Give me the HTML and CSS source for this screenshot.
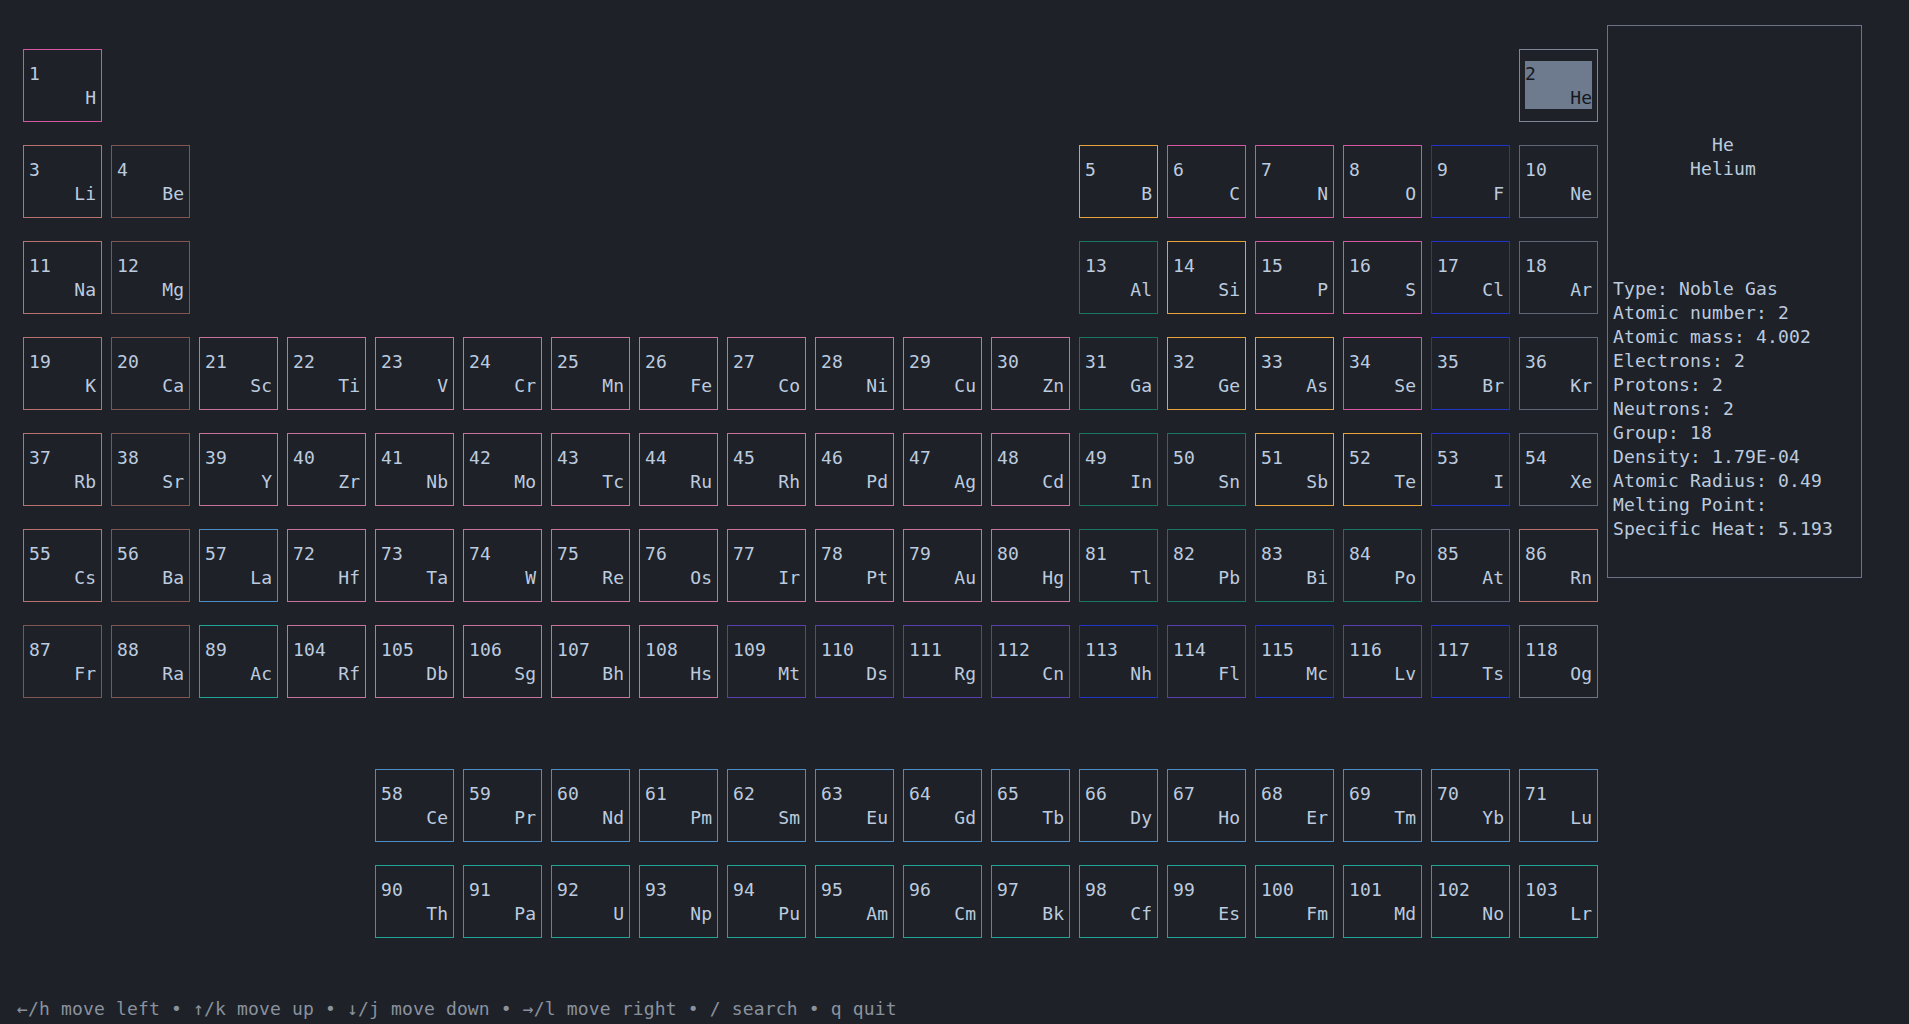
FILE: index.html
```html
<!DOCTYPE html>
<html lang="en">
<head>
<meta charset="utf-8">
<title>Periodic Table</title>
<link rel="stylesheet" href="styles.css">
</head>
<body>
<div class="screen">
  <div class="main">
    <div class="table">
      <div class="grid">
        <div class="el pink"><span>1</span><span class="s">H</span></div>
        <div class="skip16"></div>
        <div class="el gray sel"><span>2</span><span class="s">He</span></div>

        <div class="el salmon"><span>3</span><span class="s">Li</span></div>
        <div class="el brown"><span>4</span><span class="s">Be</span></div>
        <div class="skip10"></div>
        <div class="el orange"><span>5</span><span class="s">B</span></div>
        <div class="el pink"><span>6</span><span class="s">C</span></div>
        <div class="el pink"><span>7</span><span class="s">N</span></div>
        <div class="el pink"><span>8</span><span class="s">O</span></div>
        <div class="el blue"><span>9</span><span class="s">F</span></div>
        <div class="el gray"><span>10</span><span class="s">Ne</span></div>

        <div class="el salmon"><span>11</span><span class="s">Na</span></div>
        <div class="el brown"><span>12</span><span class="s">Mg</span></div>
        <div class="skip10"></div>
        <div class="el teal"><span>13</span><span class="s">Al</span></div>
        <div class="el orange"><span>14</span><span class="s">Si</span></div>
        <div class="el pink"><span>15</span><span class="s">P</span></div>
        <div class="el pink"><span>16</span><span class="s">S</span></div>
        <div class="el blue"><span>17</span><span class="s">Cl</span></div>
        <div class="el gray"><span>18</span><span class="s">Ar</span></div>

        <div class="el salmon"><span>19</span><span class="s">K</span></div>
        <div class="el brown"><span>20</span><span class="s">Ca</span></div>
        <div class="el mauve"><span>21</span><span class="s">Sc</span></div>
        <div class="el mauve"><span>22</span><span class="s">Ti</span></div>
        <div class="el mauve"><span>23</span><span class="s">V</span></div>
        <div class="el mauve"><span>24</span><span class="s">Cr</span></div>
        <div class="el mauve"><span>25</span><span class="s">Mn</span></div>
        <div class="el mauve"><span>26</span><span class="s">Fe</span></div>
        <div class="el mauve"><span>27</span><span class="s">Co</span></div>
        <div class="el mauve"><span>28</span><span class="s">Ni</span></div>
        <div class="el mauve"><span>29</span><span class="s">Cu</span></div>
        <div class="el mauve"><span>30</span><span class="s">Zn</span></div>
        <div class="el teal"><span>31</span><span class="s">Ga</span></div>
        <div class="el orange"><span>32</span><span class="s">Ge</span></div>
        <div class="el orange"><span>33</span><span class="s">As</span></div>
        <div class="el pink"><span>34</span><span class="s">Se</span></div>
        <div class="el blue"><span>35</span><span class="s">Br</span></div>
        <div class="el gray"><span>36</span><span class="s">Kr</span></div>

        <div class="el salmon"><span>37</span><span class="s">Rb</span></div>
        <div class="el brown"><span>38</span><span class="s">Sr</span></div>
        <div class="el mauve"><span>39</span><span class="s">Y</span></div>
        <div class="el mauve"><span>40</span><span class="s">Zr</span></div>
        <div class="el mauve"><span>41</span><span class="s">Nb</span></div>
        <div class="el mauve"><span>42</span><span class="s">Mo</span></div>
        <div class="el mauve"><span>43</span><span class="s">Tc</span></div>
        <div class="el mauve"><span>44</span><span class="s">Ru</span></div>
        <div class="el mauve"><span>45</span><span class="s">Rh</span></div>
        <div class="el mauve"><span>46</span><span class="s">Pd</span></div>
        <div class="el mauve"><span>47</span><span class="s">Ag</span></div>
        <div class="el mauve"><span>48</span><span class="s">Cd</span></div>
        <div class="el teal"><span>49</span><span class="s">In</span></div>
        <div class="el teal"><span>50</span><span class="s">Sn</span></div>
        <div class="el orange"><span>51</span><span class="s">Sb</span></div>
        <div class="el orange"><span>52</span><span class="s">Te</span></div>
        <div class="el blue"><span>53</span><span class="s">I</span></div>
        <div class="el gray"><span>54</span><span class="s">Xe</span></div>

        <div class="el salmon"><span>55</span><span class="s">Cs</span></div>
        <div class="el brown"><span>56</span><span class="s">Ba</span></div>
        <div class="el sky"><span>57</span><span class="s">La</span></div>
        <div class="el mauve"><span>72</span><span class="s">Hf</span></div>
        <div class="el mauve"><span>73</span><span class="s">Ta</span></div>
        <div class="el mauve"><span>74</span><span class="s">W</span></div>
        <div class="el mauve"><span>75</span><span class="s">Re</span></div>
        <div class="el mauve"><span>76</span><span class="s">Os</span></div>
        <div class="el mauve"><span>77</span><span class="s">Ir</span></div>
        <div class="el mauve"><span>78</span><span class="s">Pt</span></div>
        <div class="el mauve"><span>79</span><span class="s">Au</span></div>
        <div class="el mauve"><span>80</span><span class="s">Hg</span></div>
        <div class="el teal"><span>81</span><span class="s">Tl</span></div>
        <div class="el teal"><span>82</span><span class="s">Pb</span></div>
        <div class="el teal"><span>83</span><span class="s">Bi</span></div>
        <div class="el teal"><span>84</span><span class="s">Po</span></div>
        <div class="el gray"><span>85</span><span class="s">At</span></div>
        <div class="el salmon"><span>86</span><span class="s">Rn</span></div>

        <div class="el brown"><span>87</span><span class="s">Fr</span></div>
        <div class="el brown"><span>88</span><span class="s">Ra</span></div>
        <div class="el cyan"><span>89</span><span class="s">Ac</span></div>
        <div class="el mauve"><span>104</span><span class="s">Rf</span></div>
        <div class="el mauve"><span>105</span><span class="s">Db</span></div>
        <div class="el mauve"><span>106</span><span class="s">Sg</span></div>
        <div class="el mauve"><span>107</span><span class="s">Bh</span></div>
        <div class="el mauve"><span>108</span><span class="s">Hs</span></div>
        <div class="el purple"><span>109</span><span class="s">Mt</span></div>
        <div class="el purple"><span>110</span><span class="s">Ds</span></div>
        <div class="el purple"><span>111</span><span class="s">Rg</span></div>
        <div class="el purple"><span>112</span><span class="s">Cn</span></div>
        <div class="el blue"><span>113</span><span class="s">Nh</span></div>
        <div class="el purple"><span>114</span><span class="s">Fl</span></div>
        <div class="el blue"><span>115</span><span class="s">Mc</span></div>
        <div class="el purple"><span>116</span><span class="s">Lv</span></div>
        <div class="el blue"><span>117</span><span class="s">Ts</span></div>
        <div class="el lgray"><span>118</span><span class="s">Og</span></div>
      </div>

      <div class="grid fblock">
        <div class="skip4"></div>
        <div class="el sky"><span>58</span><span class="s">Ce</span></div>
        <div class="el sky"><span>59</span><span class="s">Pr</span></div>
        <div class="el sky"><span>60</span><span class="s">Nd</span></div>
        <div class="el sky"><span>61</span><span class="s">Pm</span></div>
        <div class="el sky"><span>62</span><span class="s">Sm</span></div>
        <div class="el sky"><span>63</span><span class="s">Eu</span></div>
        <div class="el sky"><span>64</span><span class="s">Gd</span></div>
        <div class="el sky"><span>65</span><span class="s">Tb</span></div>
        <div class="el sky"><span>66</span><span class="s">Dy</span></div>
        <div class="el sky"><span>67</span><span class="s">Ho</span></div>
        <div class="el sky"><span>68</span><span class="s">Er</span></div>
        <div class="el sky"><span>69</span><span class="s">Tm</span></div>
        <div class="el sky"><span>70</span><span class="s">Yb</span></div>
        <div class="el sky"><span>71</span><span class="s">Lu</span></div>

        <div class="skip4"></div>
        <div class="el cyan"><span>90</span><span class="s">Th</span></div>
        <div class="el cyan"><span>91</span><span class="s">Pa</span></div>
        <div class="el cyan"><span>92</span><span class="s">U</span></div>
        <div class="el cyan"><span>93</span><span class="s">Np</span></div>
        <div class="el cyan"><span>94</span><span class="s">Pu</span></div>
        <div class="el cyan"><span>95</span><span class="s">Am</span></div>
        <div class="el cyan"><span>96</span><span class="s">Cm</span></div>
        <div class="el cyan"><span>97</span><span class="s">Bk</span></div>
        <div class="el cyan"><span>98</span><span class="s">Cf</span></div>
        <div class="el cyan"><span>99</span><span class="s">Es</span></div>
        <div class="el cyan"><span>100</span><span class="s">Fm</span></div>
        <div class="el cyan"><span>101</span><span class="s">Md</span></div>
        <div class="el cyan"><span>102</span><span class="s">No</span></div>
        <div class="el cyan"><span>103</span><span class="s">Lr</span></div>
      </div>
    </div>

    <div class="panel">
      <div class="info">
        <div class="head">
          <div>He</div>
          <div>Helium</div>
        </div>
        <div class="facts">
          <div>Type: Noble Gas</div>
          <div>Atomic number: 2</div>
          <div>Atomic mass: 4.002</div>
          <div>Electrons: 2</div>
          <div>Protons: 2</div>
          <div>Neutrons: 2</div>
          <div>Group: 18</div>
          <div>Density: 1.79E-04</div>
          <div>Atomic Radius: 0.49</div>
          <div>Melting Point:</div>
          <div>Specific Heat: 5.193</div>
        </div>
      </div>
    </div>
  </div>

  <div class="footer">←/h move left • ↑/k move up • ↓/j move down • →/l move right • / search • q quit</div>
</div>
</body>
</html>
```

FILE: styles.css
```css
html, body {
  margin: 0;
  padding: 0;
  background: #1e2128;
}

body {
  font-family: "DejaVu Sans Mono", "Liberation Mono", monospace;
  font-size: 18px;
  letter-spacing: 0.16px;
  line-height: 24px;
  color: #bccbdf;
}

.screen {
  display: flex;
  flex-direction: column;
  height: 1024px;
  box-sizing: border-box;
}

.main {
  display: flex;
  align-items: flex-start;
  column-gap: 9px;
  padding: 25px 0 0 23px;
}

.table {
  padding-top: 24px;
}

.grid {
  display: grid;
  grid-template-columns: repeat(18, 79px);
  grid-auto-rows: 73px;
  column-gap: 9px;
  row-gap: 23px;
}

.fblock {
  margin-top: 71px;
}

.skip16 { grid-column: span 16; }
.skip10 { grid-column: span 10; }
.skip4 { grid-column: span 4; }

.el {
  box-sizing: border-box;
  border: 1px solid #5e6778;
  padding: 11px 5px 12px 5px;
  display: flex;
  flex-direction: column;
}

.el span {
  position: relative;
  top: 1px;
}

.el .s {
  text-align: right;
  margin-right: -0.16px;
}

.el.sel {
  background: #6e7b8f content-box;
  color: #15181e;
  border-color: #7d8696;
}

.pink   { border-color: #d555a4; }
.salmon { border-color: #b8746c; }
.brown  { border-color: #7d5750; }
.mauve  { border-color: #c7739f; }
.teal   { border-color: #197362; }
.orange { border-color: #e7a23e; }
.blue   { border-color: #1e33c8; }
.gray   { border-color: #5e6778; }
.lgray  { border-color: #6d7583; }
.sky    { border-color: #4c8dc5; }
.cyan   { border-color: #1fa696; }
.purple { border-color: #5a3fae; }

.panel {
  box-sizing: border-box;
  width: 255px;
  height: 553px;
  border: 1px solid #6b7484;
  padding: 11px 6px 12px 5px;
}

.info {
  width: max-content;
}

.head {
  margin-top: 96px;
  text-align: center;
}

.facts {
  margin-top: 96px;
}

.footer {
  margin-top: auto;
  padding: 0 0 3px 17px;
  color: #8a929f;
}
```
